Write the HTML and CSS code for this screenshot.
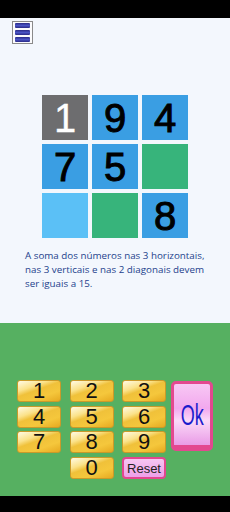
FILE: index.html
```html
<!DOCTYPE html>
<html>
<head>
<meta charset="utf-8">
<link rel="stylesheet" href="styles.css">
</head>
<body>
<div class="app">
  <div class="topbar"></div>
  <div class="main">
    <div class="menu">
      <span class="bar"></span><span class="bar"></span><span class="bar"></span>
    </div>
    <div class="board">
      <div class="cell gray white">1</div>
      <div class="cell blue">9</div>
      <div class="cell blue">4</div>
      <div class="cell blue">7</div>
      <div class="cell blue">5</div>
      <div class="cell green"></div>
      <div class="cell light"></div>
      <div class="cell green"></div>
      <div class="cell blue">8</div>
    </div>
    <p class="info">A soma dos números nas 3 horizontais, nas 3 verticais e nas 2 diagonais devem ser iguais a 15.</p>
  </div>
  <div class="pad-area">
    <div class="pad">
      <div class="keys">
        <div class="key">1</div><div class="key">2</div><div class="key">3</div>
        <div class="key">4</div><div class="key">5</div><div class="key">6</div>
        <div class="key">7</div><div class="key">8</div><div class="key">9</div>
        <div class="spacer"></div><div class="key">0</div><div class="reset">Reset</div>
      </div>
      <div class="ok"><span>Ok</span></div>
    </div>
  </div>
  <div class="bottombar"></div>
</div>
</body>
</html>
```
FILE: styles.css
```css
html, body { margin: 0; padding: 0; }
body { width: 230px; height: 512px; overflow: hidden; background: #000; font-family: "Liberation Sans", Arial, sans-serif; }
.app { display: flex; flex-direction: column; height: 512px; }
.topbar { height: 18px; background: #000; flex: none; }
.main { height: 305px; background: #f3f7fd; flex: none; display: flex; flex-direction: column; }
.menu { margin: 3px 0 0 12px; border: 1px solid #8a8a8a; background: #fbfbfd; display: flex; flex-direction: column; justify-content: center; gap: 2px; align-items: center; box-sizing: border-box; width: 21px; height: 23px; }
.bar { display: block; width: 15px; height: 5px; background: linear-gradient(#2a2a86, #4a54c4 50%, #2a2a86); border-radius: 1px; }
.board { margin: 51px 0 0 42px; display: grid; grid-template-columns: repeat(3, 46px); grid-auto-rows: 45px; gap: 4px; }
.cell { display: flex; align-items: center; justify-content: center; font-size: 40px; color: #000; line-height: 1; font-family: "Liberation Sans", Arial, sans-serif; -webkit-text-stroke: 1px #000; }
.gray { background: #6d6d6f; }
.white { color: #fff; -webkit-text-stroke: 0.3px #fff; }
.blue { background: #3a9ee3; }
.green { background: #37b47b; }
.light { background: #5bc0f6; }
.info { margin: 11px 0 0 25px; width: 182px; font-family: "Open Sans", "Noto Sans", sans-serif; font-size: 9.8px; line-height: 14px; color: #1d3f8c; }
.pad-area { height: 173px; background: #56b061; flex: none; }
.pad { display: flex; margin: 57px 0 0 17px; }
.keys { display: grid; grid-template-columns: 44px 44px 44px; column-gap: 8.5px; grid-auto-rows: 22px; row-gap: 3.7px; }
.key { background: linear-gradient(160deg, #fffbe6 0%, #fbe28a 30%, #f0c13a 45%, #f5c73c 70%, #e6a920 100%); border: 1px solid #c99a2a; border-radius: 3px; box-sizing: border-box; display: flex; align-items: center; justify-content: center; font-size: 22px; line-height: 1; color: #111; }
.reset { background: linear-gradient(#f6c6f2, #ee9fe8); border: 2px solid #e2468f; border-radius: 4px; box-sizing: border-box; display: flex; align-items: center; justify-content: center; font-size: 13px; color: #222; }
.ok { margin: 1px 0 0 5px; width: 42px; height: 70px; box-sizing: border-box; border: 3px solid #e3488f; border-bottom-width: 6px; border-radius: 5px; background: linear-gradient(#f8c8f4, #f2a8ee 40%, #fbd9f8 60%, #e99be6); display: flex; align-items: center; justify-content: center; }
.ok span { font-size: 30px; color: #1c1ccc; transform: scaleX(0.6); display: block; line-height: 1; }
.bottombar { flex: 1; background: #000; }
```
